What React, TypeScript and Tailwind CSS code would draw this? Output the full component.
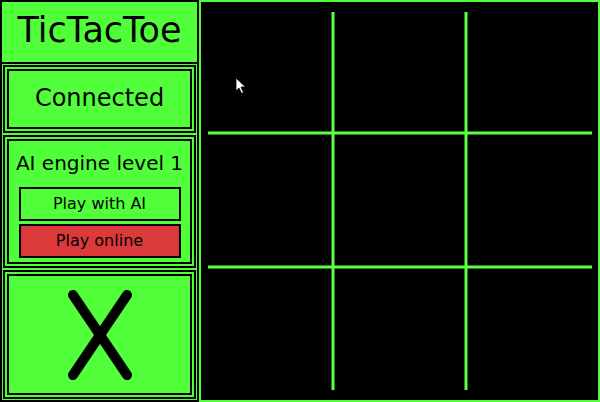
import React from 'react';

const GREEN = 'bg-[#50ff3a]';

const Board: React.FC = () => (
  <div className="relative flex-1 h-full border-2 border-[#50ff3a] bg-black">
    <svg className="block w-full h-full" stroke="#5cff48" strokeWidth={3}>
      <line x1={132} y1={10} x2={132} y2={388} />
      <line x1={265} y1={10} x2={265} y2={388} />
      <line x1={7} y1={131} x2={391} y2={131} />
      <line x1={7} y1={265} x2={391} y2={265} />
    </svg>
    {/* mouse pointer captured in the screenshot */}
    <svg className="absolute left-[34px] top-[75px]" width="12" height="18" viewBox="0 0 12 18">
      <path d="M1 1 L1 14 L4 11 L6.5 16.5 L8.5 15.5 L6 10 L10.5 10 Z" fill="white" stroke="black" strokeWidth="0.8" />
    </svg>
  </div>
);

const App: React.FC = () => {
  return (
    <div
      className="flex w-[600px] h-[402px] bg-black text-black"
      style={{ fontFamily: '"DejaVu Sans", sans-serif' }}
    >
      <aside className={`w-[199px] h-full flex flex-col border-2 border-black ${GREEN}`}>
        <div className="h-[62px] border-b-2 border-black flex items-center justify-center">
          <h1 className="text-[35px] leading-none -mt-[3px]">TicTacToe</h1>
        </div>

        <div className="flex-1 flex flex-col gap-[2px] p-[1px]">
          <div className="h-[68px] border-[6px] border-double border-black flex items-center justify-center">
            <span className="text-[24px] leading-none -mt-[2px]">Connected</span>
          </div>

          <div className="h-[133px] border-[6px] border-double border-black flex flex-col items-center pt-[12px]">
            <span className="text-[20px] leading-none">AI engine level 1</span>
            <button className="mt-[14px] w-[162px] h-[34px] border-2 border-black text-[16px] leading-none">
              Play with AI
            </button>
            <button className="mt-[3px] w-[162px] h-[34px] border-2 border-black bg-[#dc3a3a] text-[16px] leading-none">
              Play online
            </button>
          </div>

          <div className="flex-1 border-[6px] border-double border-black flex items-center justify-center">
            <svg width="66" height="92" viewBox="0 0 66 92" stroke="black" strokeWidth={10} strokeLinecap="round">
              <line x1={6} y1={6} x2={60} y2={86} />
              <line x1={60} y1={6} x2={6} y2={86} />
            </svg>
          </div>
        </div>
      </aside>

      <Board />
    </div>
  );
};

export default App;
